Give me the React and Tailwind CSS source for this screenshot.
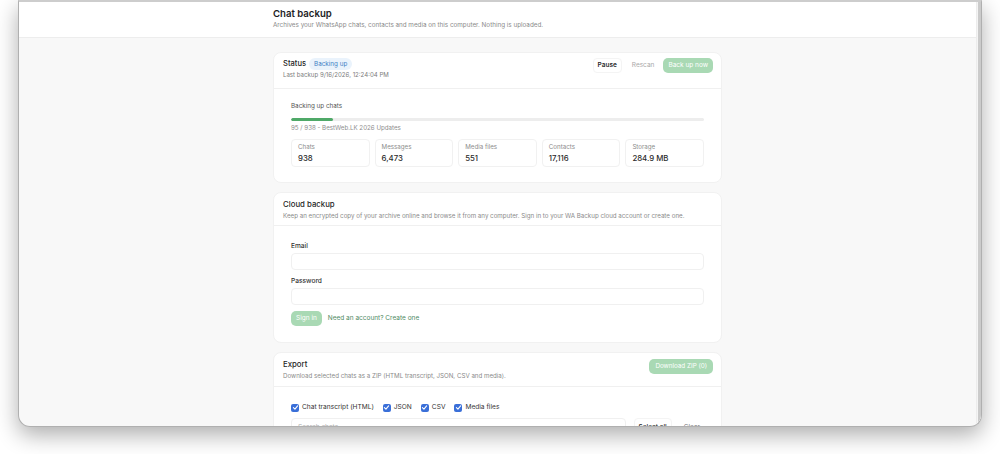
import React from "react";

const font = { fontFamily: "Inter, 'Noto Sans', sans-serif" };

function Check() {
  return (
    <span className="flex h-[8px] w-[8px] items-center justify-center rounded-[2px] bg-[#3a6fd8]">
      <svg viewBox="0 0 10 10" className="h-[7px] w-[7px]">
        <path d="M2 5.2 L4.2 7.3 L8 2.8" fill="none" stroke="white" strokeWidth="1.6" strokeLinecap="round" strokeLinejoin="round" />
      </svg>
    </span>
  );
}

function Stat({ label, value }) {
  return (
    <div className="flex h-[28px] flex-1 flex-col justify-center rounded-[4px] border border-[#f1f1f1] bg-white pl-[6px]">
      <div className="text-[6.2px] leading-[8px] text-[#8c8c8c]">{label}</div>
      <div className="mt-[2px] text-[7.8px] font-medium leading-[10px] text-[#2a2a2a]">{value}</div>
    </div>
  );
}

export default function App() {
  return (
    <div className="h-[454px] w-[1000px] overflow-hidden bg-white" style={font}>
      <div className="ml-[18px] flex h-[427px] w-[964px] overflow-hidden rounded-b-[12px] border border-t-2 border-[#b0b0b0] border-t-[#cdcdcd] bg-[#f8f8f8] shadow-[0_8px_22px_rgba(0,0,0,0.32)]">
        <div className="flex min-w-0 flex-1 flex-col">
          {/* header */}
          <div className="h-[36px] shrink-0 border-b border-[#ededed] bg-white">
            <div className="mx-auto w-[449px] pt-[6px]">
              <div className="text-[9.6px] font-semibold leading-[12px] text-[#1d1d1f]">Chat backup</div>
              <div className="mt-[1px] text-[6.3px] leading-[9px] text-[#8a8a8a]">
                Archives your WhatsApp chats, contacts and media on this computer. Nothing is uploaded.
              </div>
            </div>
          </div>

          {/* body */}
          <div className="mx-auto flex w-[449px] flex-col gap-[9px] pt-[14px]">
            {/* Status card */}
            <div className="rounded-[8px] border border-[#f1f1f1] bg-white">
              <div className="flex h-[36px] items-start justify-between border-b border-[#f0f0f0] pl-[9px] pr-[8px] pt-[5px]">
                <div>
                  <div className="flex items-center gap-[3px]">
                    <span className="text-[7.6px] font-medium leading-[12px] text-[#1f1f1f]">Status</span>
                    <span className="rounded-[6px] bg-[#eaf3fc] px-[5px] text-[6.3px] leading-[12px] text-[#3f7fc4]">Backing up</span>
                  </div>
                  <div className="text-[6.1px] leading-[10px] text-[#7c7c7c]">Last backup 9/16/2026, 12:24:04 PM</div>
                </div>
                <div className="flex items-center">
                  <span className="rounded-[4px] border border-[#f4f4f4] bg-white px-[4px] text-[6.5px] font-semibold leading-[13px] text-[#2a2a2a]">Pause</span>
                  <span className="ml-[6px] px-[4px] text-[6.5px] leading-[13px] text-[#a8a8a8]">Rescan</span>
                  <span className="ml-[5px] rounded-[5px] bg-[#a9d9b4] px-[5px] text-[6.5px] leading-[15px] text-white">Back up now</span>
                </div>
              </div>
              <div className="px-[17px] pb-[15px] pt-[13px]">
                <div className="text-[6.3px] leading-[8px] text-[#555]">Backing up chats</div>
                <div className="mt-[8px] h-[3px] w-full overflow-hidden rounded-full bg-[#ededed]">
                  <div className="h-full rounded-full bg-[#4fa968]" style={{ width: `${(95 / 938) * 100}%` }} />
                </div>
                <div className="mt-[3px] text-[6.2px] leading-[8px] text-[#8e8e8e]">95 / 938 - BestWeb.LK 2026 Updates</div>
                <div className="mt-[7px] flex gap-[5px]">
                  <Stat label="Chats" value="938" />
                  <Stat label="Messages" value="6,473" />
                  <Stat label="Media files" value="551" />
                  <Stat label="Contacts" value="17,116" />
                  <Stat label="Storage" value="284.9 MB" />
                </div>
              </div>
            </div>

            {/* Cloud backup */}
            <div className="rounded-[8px] border border-[#f1f1f1] bg-white">
              <div className="h-[33px] border-b border-[#f0f0f0] px-[9px] pt-[6px]">
                <div className="text-[7.8px] font-medium leading-[10px] text-[#1f1f1f]">Cloud backup</div>
                <div className="mt-[2px] text-[6.2px] leading-[9px] text-[#8a8a8a]">
                  Keep an encrypted copy of your archive online and browse it from any computer. Sign in to your WA Backup cloud account or create one.
                </div>
              </div>
              <div className="px-[17px] pb-[16px] pt-[16px]">
                <div className="text-[6.6px] font-medium leading-[8px] text-[#333]">Email</div>
                <div className="mt-[3px] h-[17px] rounded-[4px] border border-[#f0f0f0] bg-white" />
                <div className="mt-[7px] text-[6.6px] font-medium leading-[8px] text-[#333]">Password</div>
                <div className="mt-[3px] h-[17px] rounded-[4px] border border-[#f0f0f0] bg-white" />
                <div className="mt-[6px] flex items-center gap-[6px]">
                  <span className="rounded-[5px] bg-[#a9d9b4] px-[5px] text-[6.5px] leading-[15px] text-white">Sign in</span>
                  <span className="text-[6.5px] leading-[15px] text-[#4f8a63]">Need an account? Create one</span>
                </div>
              </div>
            </div>

            {/* Export */}
            <div className="rounded-[8px] border border-[#f1f1f1] bg-white">
              <div className="flex h-[34px] items-start justify-between border-b border-[#f0f0f0] pl-[9px] pr-[8px] pt-[6px]">
                <div>
                  <div className="text-[7.8px] font-medium leading-[10px] text-[#1f1f1f]">Export</div>
                  <div className="mt-[2px] text-[6.2px] leading-[9px] text-[#8a8a8a]">
                    Download selected chats as a ZIP (HTML transcript, JSON, CSV and media).
                  </div>
                </div>
                <span className="rounded-[5px] bg-[#a9d9b4] px-[6px] text-[6.3px] leading-[15px] text-white">Download ZIP (0)</span>
              </div>
              <div className="px-[17px] pt-[16px]">
                <div className="flex items-center gap-[9px]">
                  {["Chat transcript (HTML)", "JSON", "CSV", "Media files"].map((t) => (
                    <label key={t} className="flex items-center gap-[3px]">
                      <Check />
                      <span className="text-[6.6px] leading-[9px] text-[#333]">{t}</span>
                    </label>
                  ))}
                </div>
                <div className="mt-[6px] flex items-center gap-[8px]">
                  <div className="h-[18px] flex-1 rounded-[4px] border border-[#f0f0f0] bg-white pl-[6px] text-[6.5px] leading-[17px] text-[#b0b0b0]">Search chats</div>
                  <span className="rounded-[4px] border border-[#f4f4f4] bg-white px-[4px] text-[6.5px] font-medium leading-[16px] text-[#2a2a2a]">Select all</span>
                  <span className="px-[4px] text-[6.5px] leading-[16px] text-[#777]">Clear</span>
                </div>
              </div>
            </div>
          </div>
        </div>
        {/* scrollbar */}
        <div className="flex w-[5px] shrink-0 border-l border-[#ececec] bg-[#f4f4f4]">
          <div className="ml-auto h-full w-[3px] bg-[#cbcbcb]" />
        </div>
      </div>
    </div>
  );
}
